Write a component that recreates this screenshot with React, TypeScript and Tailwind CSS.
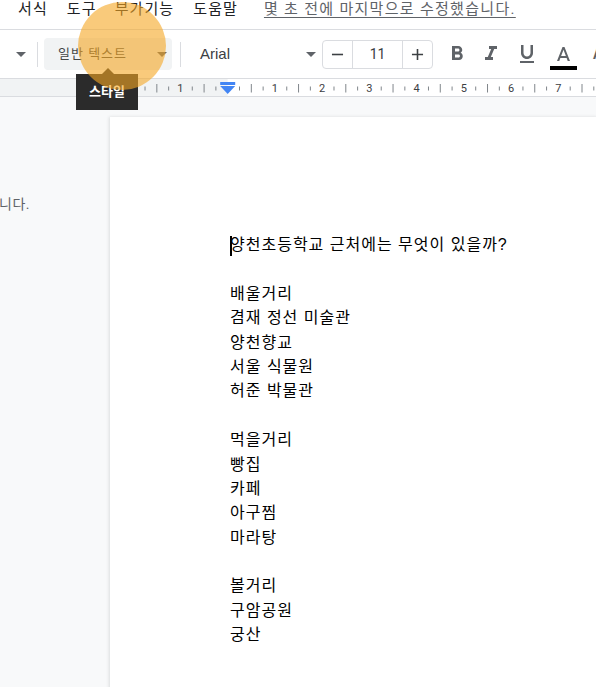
import React from 'react';
import { MdFormatBold, MdFormatItalic, MdFormatUnderlined, MdRemove, MdAdd } from 'react-icons/md';

const uiFont = { fontFamily: 'Roboto, "Noto Sans CJK KR", sans-serif' };
const docFont = { fontFamily: '"Liberation Sans", "Noto Sans CJK KR", sans-serif' };

const lines = [
  '양천초등학교 근처에는 무엇이 있을까?',
  '',
  '배울거리',
  '겸재 정선 미술관',
  '양천향교',
  '서울 식물원',
  '허준 박물관',
  '',
  '먹을거리',
  '빵집',
  '카페',
  '아구찜',
  '마라탕',
  '',
  '볼거리',
  '구암공원',
  '궁산',
];

const Caret = ({ className = '' }: { className?: string }) => (
  <svg width="10" height="5" viewBox="0 0 10 5" className={`shrink-0 ${className}`}>
    <path d="M0 0h10L5 5z" fill="#5f6368" />
  </svg>
);

const Separator = () => <div className="w-px h-[25px] bg-[#dadce0]" />;

// ruler: zero point at the left margin of the page text
const ZERO = 227.7;
const QUARTER = 11.81;

const Ruler = () => {
  const ticks: React.ReactNode[] = [];
  for (let i = -10; i <= 31; i++) {
    const x = ZERO + i * QUARTER;
    if (i === 0) continue;
    if (i % 4 === 0) {
      ticks.push(
        <text key={i} x={x} y={13} fontSize="11" fill="#3c4043" textAnchor="middle" fontFamily="Roboto, sans-serif">
          {Math.abs(i / 4)}
        </text>
      );
    } else if (i % 2 === 0) {
      ticks.push(<line key={i} x1={x} x2={x} y1={5} y2={13.5} stroke="#80868b" strokeWidth="1" />);
    } else {
      ticks.push(<line key={i} x1={x} x2={x} y1={7.5} y2={11.5} stroke="#80868b" strokeWidth="1" />);
    }
  }
  return (
    <svg width="596" height="17" className="block">
      <rect x="0" y="0" width={ZERO} height="17" fill="#f1f3f4" />
      <rect x={ZERO} y="0" width={596 - ZERO} height="17" fill="#ffffff" />
      {ticks}
      <rect x={ZERO - 7.5} y="3" width="15" height="3" fill="#4285f4" />
      <path d={`M${ZERO - 7.5} 7h15l-7.5 8z`} fill="#4285f4" />
    </svg>
  );
};

const TextColorIcon = () => (
  <svg width="28" height="27" viewBox="0 0 28 27">
    <g transform="translate(1.5,0)">
      <path d="M11 3L5.5 17h2.25l1.12-3h6.25l1.12 3h2.25L13 3h-2zm-1.38 9L12 5.67 14.38 12H9.62z" fill="#5f6368" />
    </g>
    <rect x="0" y="22" width="27" height="4" fill="#000" />
  </svg>
);

export default function App() {
  return (
    <div className="relative w-[596px] h-[687px] overflow-hidden bg-[#f8f9fa]" style={uiFont}>
      {/* menu bar */}
      <div className="h-[30px] bg-white border-b border-[#dadce0] flex items-start whitespace-nowrap overflow-hidden text-[15px] leading-[19px] tracking-[1.1px] text-[#202124]">
        <span className="ml-[18px]">서식</span>
        <span className="ml-[19px]">도구</span>
        <span className="ml-[18px]">부가기능</span>
        <span className="ml-[19px]">도움말</span>
        <span className="ml-[26px] tracking-[1.3px] text-[#5f6368] underline underline-offset-[3px]">몇 초 전에 마지막으로 수정했습니다.</span>
      </div>

      {/* toolbar */}
      <div className="h-[49px] bg-white border-b border-[#dadce0] flex items-center overflow-hidden">
        <Caret className="ml-[16px]" />
        <div className="ml-[11px] shrink-0">
          <Separator />
        </div>
        <div className="ml-[6px] shrink-0 w-[128px] h-[32px] rounded-[4px] bg-[#f1f3f4] flex items-center justify-between pl-[14px] pr-[5px]">
          <span className="text-[13px] tracking-[1px] text-[#444746] whitespace-nowrap">일반 텍스트</span>
          <Caret />
        </div>
        <div className="ml-[8px] shrink-0">
          <Separator />
        </div>
        <div className="ml-[19px] shrink-0 w-[116px] flex items-center justify-between">
          <span className="text-[15px] text-[#3c4043]" style={docFont}>Arial</span>
          <Caret />
        </div>
        <div className="ml-[6px] shrink-0 h-[29px] w-[111px] border border-[#dadce0] rounded-[4px] flex items-stretch text-[#3c4043]">
          <div className="w-[29px] flex items-center justify-center">
            <MdRemove size={19} />
          </div>
          <div className="w-[51px] border-x border-[#dadce0] flex items-center justify-center text-[14px]">11</div>
          <div className="flex-1 flex items-center justify-center">
            <MdAdd size={19} />
          </div>
        </div>
        <div className="ml-[12px] shrink-0 text-[#5f6368] flex items-center">
          <MdFormatBold size={24} />
          <div className="ml-[10px]">
            <MdFormatItalic size={24} />
          </div>
          <div className="ml-[12px]">
            <MdFormatUnderlined size={24} />
          </div>
        </div>
        <div className="ml-[11px] mt-[7px] shrink-0">
          <TextColorIcon />
        </div>
        <span className="ml-[15px] shrink-0 text-[14px] text-[#5f6368] font-bold">A</span>
      </div>

      {/* ruler */}
      <div className="border-b border-[#dadce0]">
        <Ruler />
      </div>

      {/* document area */}
      <div className="flex">
        <div className="w-[110px] shrink-0 pt-[97px]">
          <span className="block -ml-[1px] text-[14px] leading-[20px] tracking-[0.5px] text-[#5f6368]">니다.</span>
        </div>
        <div className="mt-[20px] flex-1 h-[700px] bg-white shadow-[0_1px_3px_1px_rgba(60,64,67,0.15)] pl-[120px] pt-[116px]">
          <div className="relative text-[16px] leading-[24.4px] tracking-[1px] text-black" style={docFont}>
            <span className="absolute left-0 top-[3px] w-[2px] h-[20px] bg-black" />
            {lines.map((line, i) => (
              <div key={i} className="h-[24.4px] whitespace-pre">
                {line}
              </div>
            ))}
          </div>
        </div>
      </div>

      {/* tooltip */}
      <div className="absolute left-[76px] top-[74px] w-[62px] h-[36px] bg-[#2b2b2b] flex items-center justify-center">
        <div className="absolute -top-[6px] left-[26px] w-0 h-0 border-l-[6px] border-r-[6px] border-b-[6px] border-l-transparent border-r-transparent border-b-[#2b2b2b]" />
        <span className="text-white text-[13px] font-bold">스타일</span>
      </div>

      {/* click highlight */}
      <div className="absolute left-[78px] top-[2px] w-[88px] h-[88px] rounded-full bg-[#f5a623]/60" />
    </div>
  );
}
